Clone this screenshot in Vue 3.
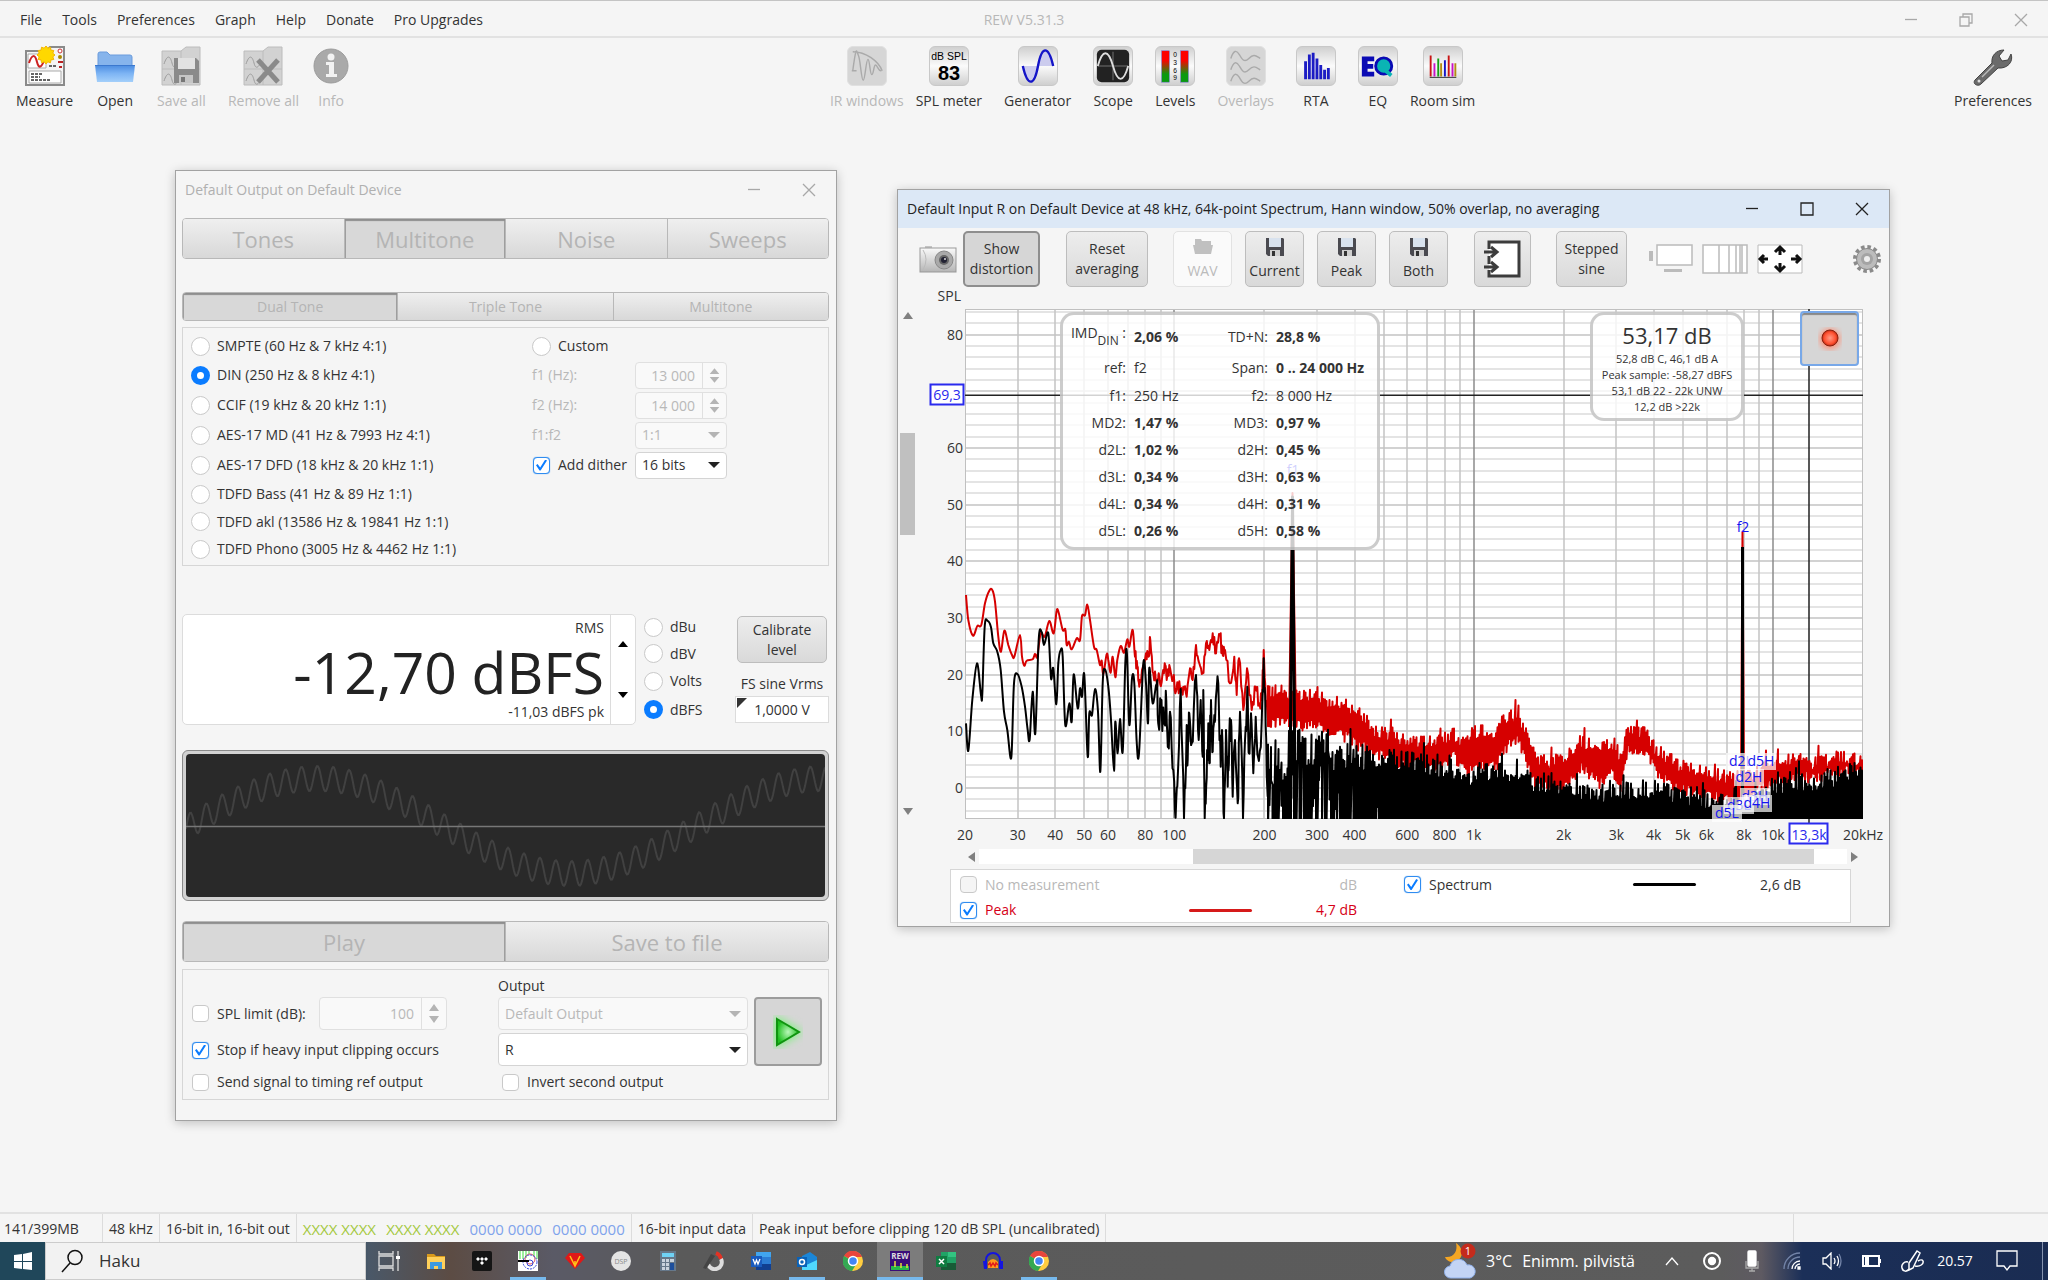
<template>
  <div class="app">
    <!-- menu bar -->
    <header class="menubar">
      <nav class="menu">
        <a v-for="item in menuItems" :key="item" href="#">{{ item }}</a>
      </nav>
      <span class="app-title">REW V5.31.3</span>
      <div class="win-controls muted">
        <button aria-label="Minimize"><svg width="14" height="14"><path d="M1 6.5h12" /></svg></button>
        <button aria-label="Restore"><svg width="14" height="14"><path d="M1 4h9v9H1zM4 4V1h9v9h-3" /></svg></button>
        <button aria-label="Close"><svg width="14" height="14"><path d="M1 1l12 12M13 1L1 13" /></svg></button>
      </div>
    </header>

    <!-- main toolbar -->
    <div class="toolbar">
      <div class="tool-group">
        <button class="tool">
          <svg width="40" height="40" viewBox="0 0 40 40">
            <path d="M1 5h20l4-4h14v38H1z" fill="#f4f4f4" stroke="#8a8a8a" stroke-width="2" />
            <path d="M3 8h18v14H3zM4 25h32v12H4z" fill="#fff" stroke="#aaa" />
            <path d="M4 17c3-9 6-9 8-1s5 5 8-4" fill="none" stroke="#c22" stroke-width="2" />
            <path d="M24 20h7M6 28h12M6 31h9M6 34h20" stroke="#333" stroke-width="1.5" stroke-dasharray="3 1" />
            <circle cx="35" cy="5" r="2" fill="#fff" stroke="#c33" />
            <circle cx="35" cy="11" r="2" fill="#a80" />
            <path d="M33 16h5M34 21h3" stroke="#b22" stroke-width="2" />
            <path :d="starPath" fill="#ffd800" stroke="#f3b600" />
          </svg>
          <span>Measure</span>
        </button>
        <button class="tool">
          <svg width="40" height="40" viewBox="0 0 40 40">
            <defs>
              <linearGradient id="folder" x1="0" y1="0" x2="0" y2="1">
                <stop offset="0" stop-color="#4a8be0" /><stop offset="0.5" stop-color="#7db4f4" /><stop offset="1" stop-color="#a3cffa" />
              </linearGradient>
            </defs>
            <path d="M3 8q0-2 2-2h7l3 3h20q2 0 2 2v9H3z" fill="#86b4ec" stroke="#6a9bdc" />
            <path d="M0 19h40l-2 17H2z" fill="url(#folder)" />
            <path d="M0 19.500h40" stroke="#3b78cf" />
          </svg>
          <span>Open</span>
        </button>
        <button class="tool" disabled>
          <svg width="40" height="40" viewBox="0 0 40 40">
            <path d="M1 5h19l5-4h14v38H1z" fill="#d2d2d2" stroke="#bcbcbc" />
            <path d="M1 23h38M20 5v34" stroke="#bcbcbc" />
            <path d="M3 18c3-9 6-9 8-1s5 3 8-2M3 35c3-9 6-9 8-1s5 3 8-2" fill="none" stroke="#9d9d9d" />
            <path d="M13 12h22l3 3v22H13z" fill="#8a8a8a" />
            <path d="M17 12h17v11H17z" fill="#e2e2e2" />
            <path d="M18 29h14v8H18z" fill="#c6c6c6" />
            <path d="M20 31h4v5h-4z" fill="#777" />
          </svg>
          <span>Save all</span>
        </button>
        <div class="tool-pair">
          <button class="tool" disabled>
            <svg width="40" height="40" viewBox="0 0 40 40">
              <path d="M1 5h19l5-4h14v38H1z" fill="#d2d2d2" stroke="#bcbcbc" />
              <path d="M1 23h38M20 5v34" stroke="#bcbcbc" />
              <path d="M3 18c3-9 6-9 8-1s5 3 8-2M3 35c3-9 6-9 8-1s5 3 8-2" fill="none" stroke="#9d9d9d" />
              <path d="M15 14l20 22M35 14L15 36" stroke="#8a8a8a" stroke-width="5" />
            </svg>
            <span>Remove all</span>
          </button>
          <button class="tool" disabled>
            <svg width="40" height="40" viewBox="0 0 40 40">
              <circle cx="20" cy="20" r="17" fill="#a9a9a9" stroke="#9c9c9c" />
              <circle cx="20" cy="11" r="3.500" fill="#f2f2f2" />
              <path d="M15 16h8v12h3v3H15v-3h3v-9h-3z" fill="#f2f2f2" />
            </svg>
            <span>Info</span>
          </button>
        </div>
      </div>

      <div class="tool-group">
        <div class="tool-pair">
          <button class="tool" disabled>
            <svg class="tile off" width="40" height="40" viewBox="0 0 40 40">
              <path d="M5 25c4-30 4-20 6-16s3 26 5 26 3-22 5-22 2 16 4 16 2-10 4-10 3 7 6 6M5 5c14 0 27 10 31 20M4 25h5" />
            </svg>
            <span>IR windows</span>
          </button>
          <button class="tool">
            <svg class="tile" width="40" height="40" viewBox="0 0 40 40">
              <text x="20" y="14" font-size="11" text-anchor="middle" class="arial">dB SPL</text>
              <text x="20" y="35" font-size="21" font-weight="700" text-anchor="middle" class="arial">83</text>
            </svg>
            <span>SPL meter</span>
          </button>
        </div>
        <button class="tool">
          <svg class="tile" width="40" height="40" viewBox="0 0 40 40">
            <path d="M4 20C9 42 16 42 20 20zM20 20C25-2 32-2 36 20z" fill="#ccccee" />
            <path d="M4 20C9 42 16 42 20 20S31-2 36 20" fill="none" stroke="#1414c8" stroke-width="2.500" />
          </svg>
          <span>Generator</span>
        </button>
        <button class="tool">
          <svg class="tile" width="40" height="40" viewBox="0 0 40 40">
            <rect x="3" y="3" width="34" height="34" rx="5" fill="#222" />
            <path d="M20 5v30M4 20h32" stroke="#777" />
            <path d="M4 20C9 2 15 2 20 20s11 18 16 0" fill="none" stroke="#ddd" stroke-width="2" />
          </svg>
          <span>Scope</span>
        </button>
        <button class="tool">
          <svg class="tile" width="40" height="40" viewBox="0 0 40 40">
            <defs>
              <linearGradient id="level" x1="0" y1="0" x2="0" y2="1">
                <stop offset="0.300" stop-color="#f00" /><stop offset="0.750" stop-color="#0a9a10" />
              </linearGradient>
            </defs>
            <rect x="6" y="4" width="8" height="33" fill="url(#level)" stroke="#66c" stroke-width="0.500" />
            <rect x="26" y="4" width="8" height="33" fill="url(#level)" stroke="#66c" stroke-width="0.500" />
            <text v-for="(n, i) in [0, 3, 6, 9]" :key="n" x="20" :y="11 + i * 8" font-size="7" text-anchor="middle" class="arial">{{ n }}</text>
          </svg>
          <span>Levels</span>
        </button>
        <button class="tool" disabled>
          <svg class="tile off" width="40" height="40" viewBox="0 0 40 40">
            <path v-for="y in [0, 12, 24]" :key="y" :d="`M4 ${12 + y}c3-9 6-9 9-4s5 9 10 4 7-3 12 0`" />
          </svg>
          <span>Overlays</span>
        </button>
        <button class="tool">
          <svg class="tile" width="40" height="40" viewBox="0 0 40 40">
            <path d="M9 34V15M13 34V8M17 34V6M21 34V12M25 34V19M29 34V24M33 34V22" stroke="#1c1cc4" stroke-width="3" />
          </svg>
          <span>RTA</span>
        </button>
        <div class="tool-pair">
          <button class="tool">
            <svg class="tile" width="40" height="40" viewBox="0 0 40 40">
              <path d="M3 10h13v5H9v3h6v5H9v3h7v5H3z" fill="#0a0ab4" />
              <circle cx="26" cy="20" r="8.500" fill="#0ab4b4" stroke="#0a0ab4" stroke-width="3" />
              <path d="M28 25l6 5" stroke="#0ab4b4" stroke-width="4" />
            </svg>
            <span>EQ</span>
          </button>
          <button class="tool">
            <svg class="tile" width="40" height="40" viewBox="0 0 40 40">
              <path d="M7 9v22M26 9v22" stroke="#c81414" stroke-width="2" />
              <path d="M11 17v14M30 17v14" stroke="#c814c8" stroke-width="2" />
              <path d="M15 12v19" stroke="#14a014" stroke-width="2" />
              <path d="M18 17v14M33 17v14" stroke="#b48c14" stroke-width="2" />
              <path d="M22 14v17" stroke="#1414c8" stroke-width="2" />
              <path d="M6 32h28" stroke="#333" />
            </svg>
            <span>Room sim</span>
          </button>
        </div>
      </div>

      <button class="tool">
        <svg width="40" height="40" viewBox="0 0 40 40">
          <path d="M2 34L19 17c-1-7 4-13 12-13l-5 6 3 5 6-1 3-6c3 8-4 15-13 14L8 38c-3 3-9 0-6-4z" fill="#6b6b6b" stroke="#444" />
          <circle cx="6" cy="35" r="1.500" fill="#ddd" />
          <path d="M9 31l12-12" stroke="#bbb" stroke-width="1.500" />
        </svg>
        <span>Preferences</span>
      </button>
    </div>

    <main class="desktop">
      <!-- generator window -->
      <section class="window generator">
        <div class="titlebar">
          <span class="title">Default Output on Default Device</span>
          <div class="win-controls muted">
            <button aria-label="Minimize"><svg width="14" height="14"><path d="M1 6.500h12" /></svg></button>
            <button aria-label="Close"><svg width="14" height="14"><path d="M1 1l12 12M13 1L1 13" /></svg></button>
          </div>
        </div>
        <div class="tabs large">
          <button v-for="t in ['Tones', 'Multitone', 'Noise', 'Sweeps']" :key="t" :class="{ active: t === 'Multitone' }">{{ t }}</button>
        </div>
        <div class="tabs sub">
          <button v-for="(t, i) in ['Dual Tone', 'Triple Tone', 'Multitone']" :key="t" :class="{ active: i === 0 }">{{ t }}</button>
        </div>

        <div class="panel tone-panel">
          <div class="tone-list">
            <label v-for="tone in tones" :key="tone" class="choice">
              <input v-model="selectedTone" type="radio" name="tone" :value="tone" />{{ tone }}
            </label>
          </div>
          <div class="custom">
            <label class="choice"><input v-model="selectedTone" type="radio" name="tone" value="Custom" />Custom</label>
            <div class="custom-row">
              <label class="dim" for="f1">f1 (Hz):</label>
              <span class="spinner off"><input id="f1" type="text" value="13 000" disabled /><svg width="24" height="25" viewBox="0 0 24 25"><path d="M7 11l5-6 5 6zM7 14l5 6 5-6z" /></svg></span>
            </div>
            <div class="custom-row">
              <label class="dim" for="f2">f2 (Hz):</label>
              <span class="spinner off"><input id="f2" type="text" value="14 000" disabled /><svg width="24" height="25" viewBox="0 0 24 25"><path d="M7 11l5-6 5 6zM7 14l5 6 5-6z" /></svg></span>
            </div>
            <div class="custom-row">
              <label class="dim" for="ratio">f1:f2</label>
              <span class="select off"><select id="ratio" disabled><option>1:1</option></select><svg width="12" height="8"><path d="M0 1h12l-6 6z" /></svg></span>
            </div>
            <div class="custom-row">
              <label class="choice"><input v-model="addDither" type="checkbox" />Add dither</label>
              <span class="select"><select aria-label="Dither bits"><option>16 bits</option></select><svg width="12" height="8"><path d="M0 1h12l-6 6z" /></svg></span>
            </div>
          </div>
        </div>

        <div class="level-row">
          <div class="level-box">
            <div class="level-text">
              <span>RMS</span>
              <span class="level-value">-12,70 dBFS</span>
              <span>-11,03 dBFS pk</span>
            </div>
            <div class="level-arrows">
              <button aria-label="Up"><svg width="12" height="8"><path d="M1 7h10L6 1z" /></svg></button>
              <button aria-label="Down"><svg width="12" height="8"><path d="M1 1h10L6 7z" /></svg></button>
            </div>
          </div>
          <div class="units">
            <label v-for="u in ['dBu', 'dBV', 'Volts', 'dBFS']" :key="u" class="choice">
              <input v-model="unit" type="radio" name="unit" :value="u" />{{ u }}
            </label>
          </div>
          <div class="calibrate">
            <button class="btn">Calibrate<br />level</button>
            <label for="vrms">FS sine Vrms</label>
            <span class="vrms"><input id="vrms" type="text" value="1,0000 V" /></span>
          </div>
        </div>

        <div class="wave">
          <svg width="100%" height="143" viewBox="0 0 639 143" preserveAspectRatio="none">
            <path :d="wavePath" fill="none" stroke="#414141" stroke-width="2" />
            <path d="M0 72.500h639" stroke="#777" stroke-width="1.500" />
          </svg>
        </div>

        <div class="tabs large">
          <button class="active">Play</button>
          <button>Save to file</button>
        </div>

        <div class="panel output-panel">
          <div class="options">
            <div class="limit">
              <label class="choice"><input type="checkbox" />SPL limit (dB):</label>
              <span class="spinner off tall"><input type="text" value="100" aria-label="SPL limit" disabled /><svg width="24" height="31" viewBox="0 0 24 31"><path d="M7 13l5-7 5 7zM7 18l5 7 5-7z" /></svg></span>
            </div>
            <label class="choice"><input v-model="stopOnClip" type="checkbox" />Stop if heavy input clipping occurs</label>
            <label class="choice"><input type="checkbox" />Send signal to timing ref output</label>
          </div>
          <div class="outputs">
            <label for="device">Output</label>
            <span class="select tall off"><select id="device" disabled><option>Default Output</option></select><svg width="12" height="8"><path d="M0 1h12l-6 6z" /></svg></span>
            <span class="select tall"><select aria-label="Channel"><option>R</option></select><svg width="12" height="8"><path d="M0 1h12l-6 6z" /></svg></span>
            <label class="choice invert"><input type="checkbox" />Invert second output</label>
          </div>
          <button class="play" aria-label="Play">
            <svg width="50" height="60" viewBox="0 0 50 60">
              <defs>
                <radialGradient id="play"><stop offset="0" stop-color="#b8f7b8" /><stop offset="1" stop-color="#1fc01f" /></radialGradient>
                <filter id="glow"><feGaussianBlur stdDeviation="4" /></filter>
              </defs>
              <path d="M13 16l24 14-24 14z" fill="#6fe86f" stroke="#8cf08c" stroke-width="4" filter="url(#glow)" />
              <path d="M14 17l22 13-22 13z" fill="url(#play)" stroke="#109410" stroke-width="2" />
            </svg>
          </button>
        </div>
      </section>

      <!-- RTA window -->
      <section class="window rta">
        <div class="titlebar">
          <span class="title">Default Input R on Default Device at 48 kHz, 64k-point Spectrum, Hann window, 50% overlap, no averaging</span>
          <div class="win-controls">
            <button aria-label="Minimize"><svg width="14" height="14"><path d="M1 6.500h12" /></svg></button>
            <button aria-label="Maximize"><svg width="14" height="14"><path d="M1 1h12v12H1z" /></svg></button>
            <button aria-label="Close"><svg width="14" height="14"><path d="M1 1l12 12M13 1L1 13" /></svg></button>
          </div>
        </div>

        <div class="rta-tools">
          <button class="bare" aria-label="Capture image">
            <svg width="38" height="28" viewBox="0 0 38 28">
              <defs>
                <linearGradient id="cam" x1="0" y1="0" x2="0" y2="1"><stop offset="0" stop-color="#fafafa" /><stop offset="1" stop-color="#b5b5b5" /></linearGradient>
              </defs>
              <path d="M6 1h7v3H6z" fill="#c4c4c4" />
              <rect x="1" y="3" width="36" height="24" fill="url(#cam)" stroke="#999" />
              <path d="M4 5q6 9 0 20" fill="none" stroke="#bbb" />
              <circle cx="25" cy="15" r="9" fill="#a9a9a9" stroke="#888" />
              <circle cx="25" cy="15" r="5" fill="#666" />
              <circle cx="25" cy="15" r="3" fill="#223" />
              <circle cx="26" cy="14" r="1" fill="#ddd" />
            </svg>
          </button>
          <button class="btn pressed distortion-btn">Show<br />distortion</button>
          <button class="btn reset-btn">Reset<br />averaging</button>
          <div class="save-buttons">
            <button class="btn" disabled>
              <svg width="20" height="20" viewBox="0 0 20 20"><path d="M2 2h6l1 2h9v4H2zM0 8h20l-2 9H2z" fill="#c0c0c0" /></svg>WAV
            </button>
            <button v-for="s in ['Current', 'Peak', 'Both']" :key="s" class="btn">
              <svg width="20" height="20" viewBox="0 0 20 20">
                <path d="M1 1h17l1 1v17H3l-2-2z" fill="#4a4a50" />
                <path d="M4 1h12v9H4z" fill="#d8e2ee" />
                <path d="M5 13h10v6H5z" fill="#d0d0d0" />
                <path d="M7 14h3v5H7z" fill="#333" />
              </svg>{{ s }}
            </button>
          </div>
          <button class="btn import-btn" aria-label="Import">
            <svg width="38" height="38" viewBox="0 0 38 38">
              <path d="M5 2h30v34H5z" fill="#fff" />
              <path d="M5 9V2h30v34H5v-6M5 16v8" fill="none" stroke="#3c3c3c" stroke-width="3" />
              <path d="M0 12h12M7 7l6 5-6 5M0 27h12M7 22l6 5-6 5" fill="none" stroke="#3c3c3c" stroke-width="3" />
            </svg>
          </button>
          <button class="btn stepped-btn">Stepped<br />sine</button>
          <div class="view-icons">
            <button class="bare" aria-label="Scrollbars"><svg width="44" height="30" viewBox="0 0 44 30"><path d="M0 7h4v10H0zM15 25h18v3H15z" fill="#bbb" /><path d="M8 1h35v20H8z" fill="#fff" stroke="#bbb" stroke-width="1.500" /></svg></button>
            <button class="bare" aria-label="Frequency axis"><svg width="46" height="30" viewBox="0 0 46 30"><path d="M1 1h44v28H1z" fill="#fff" /><path d="M1 1h44v28H1zM17 1v28M27 1v28M34 1v28M38 1v28M40 1v28" fill="none" stroke="#bbb" stroke-width="1.500" /></svg></button>
            <button class="bare" aria-label="Graph limits"><svg width="46" height="30" viewBox="0 0 46 30"><path d="M1 1h44v28H1z" fill="#fff" stroke="#bbb" /><path d="M11 15H3M7 11l-4 4 4 4M34 15h9M39 11l4 4-4 4M23 11V3M18 8l5-5 5 5M23 19v8M18 22l5 5 5-5" fill="none" stroke="#111" stroke-width="3" /></svg></button>
          </div>
          <button class="bare gear" aria-label="Controls">
            <svg width="30" height="30" viewBox="0 0 30 30">
              <circle cx="15" cy="15" r="12" fill="none" stroke="#8a8a8a" stroke-width="4" stroke-dasharray="3.500 2.783" />
              <circle cx="15" cy="15" r="10.500" fill="#bcbcbc" stroke="#8a8a8a" />
              <circle cx="15" cy="15" r="6" fill="#a4a4a4" />
              <circle cx="15" cy="15" r="3" fill="#eee" />
            </svg>
          </button>
        </div>

        <div class="graph-row">
          <div class="vscroll">
            <svg width="10" height="7"><path d="M0 7h10L5 0z" /></svg>
            <div class="vtrack"><div class="vthumb"></div></div>
            <svg width="10" height="7"><path d="M0 0h10L5 7z" /></svg>
          </div>
          <div class="graph">
            <svg class="plot" width="972" height="561" viewBox="0 0 972 561">
              <defs>
                <clipPath id="plot-area"><rect x="48" y="22" width="898" height="510" /></clipPath>
              </defs>
              <rect x="48" y="22" width="898" height="510" fill="#fff" />
              <path :d="minorLines" stroke="#dcdcdc" stroke-width="1.500" />
              <path :d="majorLines" stroke="#c4c4c4" stroke-width="1.500" />
              <path :d="decadeLines" stroke="#8c8c8c" stroke-width="1.500" />
              <rect x="48.500" y="22.500" width="897" height="509" fill="none" stroke="#c0c0c0" />
              <path :d="cursorLines" stroke="#222" stroke-width="1.500" />
              <g clip-path="url(#plot-area)" fill="none" stroke-linejoin="round">
                <path :d="peakTrace" stroke="#d60000" stroke-width="2" />
                <path :d="peakNoise" stroke="#d60000" stroke-width="2" />
                <path d="M372 440L375.500 206L379 440M824 490L825.500 245L827 490" stroke="#d60000" stroke-width="2" />
                <path :d="spectrumTrace" stroke="#000" stroke-width="2" />
                <path :d="spectrumNoise" stroke="#000" stroke-width="2" />
                <path :d="spectrumFloor" fill="#000" />
                <path d="M373.500 532V440L375.500 210L377.500 440V532M825.500 532V260" stroke="#000" stroke-width="3" />
              </g>
              <g class="marker">
                <template v-for="m in markers" :key="m.text">
                  <rect v-if="m.box" :x="m.x - 15" :y="m.y - 13" width="30" height="17" fill="#fff" fill-opacity="0.700" />
                  <text :x="m.x" :y="m.y">{{ m.text }}</text>
                </template>
              </g>
              <g class="axis" text-anchor="end">
                <text x="44" y="14">SPL</text>
                <text v-for="db in [80, 60, 50, 40, 30, 20, 10, 0]" :key="db" x="46" :y="yOf(db) + 5">{{ db }}</text>
              </g>
              <g class="axis" text-anchor="middle">
                <text v-for="f in freqLabels" :key="f.text" :x="xOf(f.hz)" y="553">{{ f.text }}</text>
              </g>
              <g class="cursor-label">
                <rect x="13.500" y="97.500" width="33" height="20" /><text x="30" y="113">69,3</text>
                <rect x="872.500" y="536.500" width="38" height="20" /><text x="892" y="553">13,3k</text>
              </g>
            </svg>

            <div class="info distortion">
              <template v-for="(row, i) in distortion" :key="i">
                <span class="key" :class="{ imd: i === 0 }">{{ row[0] }}<sub v-if="i === 0">DIN</sub><template v-if="i === 0"> :</template></span>
                <span :class="{ strong: row[4] }">{{ row[1] }}</span>
                <span class="key">{{ row[2] }}</span>
                <span :class="{ strong: row[5] }">{{ row[3] }}</span>
              </template>
            </div>

            <div class="info spl">
              <strong>53,17 dB</strong>
              <span>52,8 dB C, 46,1 dB A</span>
              <span>Peak sample: -58,27 dBFS</span>
              <span>53,1 dB 22 - 22k UNW</span>
              <span>12,2 dB &gt;22k</span>
            </div>

            <button class="record" aria-label="Record">
              <svg width="40" height="40" viewBox="0 0 40 40">
                <defs>
                  <radialGradient id="led"><stop offset="0" stop-color="#ff9a86" /><stop offset="0.700" stop-color="#ff5233" /><stop offset="1" stop-color="#c22c12" /></radialGradient>
                  <filter id="led-glow"><feGaussianBlur stdDeviation="3" /></filter>
                </defs>
                <circle cx="20" cy="20" r="10" fill="#ff8a70" filter="url(#led-glow)" />
                <circle cx="20" cy="19" r="8" fill="url(#led)" stroke="#8a2010" />
              </svg>
            </button>
          </div>
        </div>

        <div class="hscroll">
          <svg width="7" height="10"><path d="M7 0v10L0 5z" /></svg>
          <div class="htrack"><div class="hthumb"></div></div>
          <svg width="7" height="10"><path d="M0 0v10l7-5z" /></svg>
        </div>

        <div class="legend">
          <label class="choice dim"><input type="checkbox" disabled />No measurement</label>
          <span></span>
          <span class="value dim">dB</span>
          <label class="choice"><input v-model="showSpectrum" type="checkbox" />Spectrum</label>
          <i class="line"></i>
          <span class="value">2,6 dB</span>
          <label class="choice red"><input v-model="showPeak" type="checkbox" />Peak</label>
          <i class="line red"></i>
          <span class="value red">4,7 dB</span>
        </div>
      </section>
    </main>

    <!-- status bar -->
    <footer class="status">
      <span class="memory">141/399MB</span>
      <span>48 kHz</span>
      <span>16-bit in, 16-bit out</span>
      <span class="bits"><b>XXXX XXXX</b><b>XXXX XXXX</b><em>0000 0000</em><em>0000 0000</em></span>
      <span>16-bit input data</span>
      <span>Peak input before clipping 120 dB SPL (uncalibrated)</span>
      <span class="fill"></span>
      <span class="last"></span>
    </footer>

    <!-- taskbar -->
    <div class="taskbar">
      <button class="start" aria-label="Start">
        <svg width="18" height="18" viewBox="0 0 18 18"><path d="M0 3l8-1v7H0zM9 2l9-2v9H9zM0 10h8v7l-8-1zM9 10h9v8l-9-1z" fill="#fff" /></svg>
      </button>
      <label class="search">
        <svg width="24" height="24" viewBox="0 0 24 24"><circle cx="15" cy="8.500" r="7" fill="none" stroke="#111" stroke-width="1.500" /><path d="M10 14l-8 9" stroke="#111" stroke-width="1.500" /></svg>
        <input type="text" placeholder="Haku" />
      </label>
      <div class="apps">
        <button aria-label="Task view"><svg width="22" height="22" viewBox="0 0 22 22"><path d="M1 1v3h14V1M1 21v-3h14v3M1 6h14v10H1zM20 1v20" fill="none" stroke="#ddd" stroke-width="1.300" /><path d="M18 6h4v3h-4z" fill="#fff" /></svg></button>
        <button aria-label="Files"><svg width="20" height="20" viewBox="0 0 20 20"><path d="M1 3h7l2 2h9v12H1z" fill="#d99a1c" /><path d="M1 6h18v12H1z" fill="#ffd05a" /><path d="M4 18v-7h12v7h-4v-3H8v3z" fill="#3f9ade" /></svg></button>
        <button aria-label="Tidal"><svg width="20" height="20" viewBox="0 0 20 20"><rect width="20" height="20" rx="2" fill="#151515" /><path d="M4 8l2-2 2 2-2 2zM8 8l2-2 2 2-2 2zM12 8l2-2 2 2-2 2zM8 12l2-2 2 2-2 2z" fill="#fff" /></svg></button>
        <button class="open" aria-label="Signal viewer">
          <svg width="20" height="20" viewBox="0 0 20 20"><rect width="20" height="20" fill="#fff" /><path d="M2 0v8M5 0v8M8 0v7M11 0v3M16 0v5M19 0v8" stroke="#3ddc3d" /><circle cx="12" cy="8" r="5" fill="none" stroke="#e05060" /><circle cx="12" cy="11" r="7" fill="none" stroke="#3346d8" stroke-dasharray="2 1" /><circle cx="12" cy="12" r="3" fill="none" stroke="#3346d8" /><path d="M0 10h11" stroke="#000" stroke-width="2" /></svg>
        </button>
        <button aria-label="Voice"><svg width="20" height="18" viewBox="0 0 20 18"><path d="M4 1h12l4 5-10 11L0 6z" fill="#e01818" /><path d="M5 4l5 10 5-10M10 9v5" fill="none" stroke="#ffc21a" stroke-width="1.500" /></svg></button>
        <button aria-label="DSP"><svg width="20" height="20" viewBox="0 0 20 20"><circle cx="10" cy="10" r="10" fill="#e4e4e4" /><text x="10" y="13" font-size="7" text-anchor="middle" fill="#8a8a8a">DSP</text></svg></button>
        <button aria-label="Calculator"><svg width="18" height="20" viewBox="0 0 18 20"><rect x="1" width="16" height="20" fill="#66788a" /><path d="M3 2h12v4H3z" fill="#6fd2f5" /><path d="M3 8h3v3H3zM7 8h3v3H7zM11 8h4v3h-4zM3 12h3v3H3zM7 12h3v3H7zM3 16h3v3H3zM7 16h3v3H7z" fill="#c8d2dc" /><path d="M11 12h4v7h-4z" fill="#1e4f9c" /></svg></button>
        <button aria-label="Gauge"><svg width="22" height="20" viewBox="0 0 22 20"><path d="M13 2a8 8 0 0 1 5 6" fill="none" stroke="#e33224" stroke-width="4" /><path d="M18 8a7 7 0 1 1-13 5" fill="none" stroke="#ddd" stroke-width="4" /><path d="M8 3l4 2-9 13-3-1z" fill="#444" /></svg></button>
        <button aria-label="Word"><svg width="20" height="18" viewBox="0 0 20 18"><path d="M5 0h15v18H5z" fill="#2b7cd3" /><path d="M5 0h15v5H5z" fill="#41a5ee" /><path d="M5 12h15v6H5z" fill="#103f91" /><path d="M0 4h11v11H0z" fill="#185abd" /><path d="M2 7l2 5 1.500-4L7 12l2-5" fill="none" stroke="#fff" stroke-width="1.300" /></svg></button>
        <button class="open" aria-label="Outlook"><svg width="20" height="18" viewBox="0 0 20 18"><path d="M5 4l8-4 7 5v13H5z" fill="#1a86d8" /><path d="M5 15l15-7v10H5z" fill="#50d9ff" /><path d="M0 5h10v10H0z" fill="#0a62b8" /><circle cx="5" cy="10" r="2.500" fill="none" stroke="#fff" stroke-width="1.500" /></svg></button>
        <button aria-label="Chrome"><svg width="20" height="20" viewBox="0 0 20 20"><circle cx="10" cy="10" r="10" fill="#ffcd40" /><path d="M10 10L1 5a10 10 0 0 1 18 1h-9z" fill="#e8453c" /><path d="M1 5a10 10 0 0 0 8 15l5-8-4-2z" fill="#34a853" /><circle cx="10" cy="10" r="4.500" fill="#4285f4" stroke="#fff" stroke-width="1.500" /></svg></button>
        <button class="open current" aria-label="REW"><svg width="20" height="20" viewBox="0 0 20 20"><rect width="20" height="20" fill="#3a0d78" /><text x="10" y="8" font-size="8" font-weight="700" text-anchor="middle" fill="#ddd">REW</text><path d="M1 17h18" stroke="#27b84a" stroke-width="4" /><path d="M5 10v6M11 12v5M17 13v4" stroke="#e8dc3a" stroke-width="1.500" /></svg></button>
        <button aria-label="Excel"><svg width="20" height="18" viewBox="0 0 20 18"><path d="M5 0h15v18H5z" fill="#21a366" /><path d="M12 0h8v5h-8z" fill="#33c481" /><path d="M5 11h15v7H5z" fill="#185c37" /><path d="M0 4h11v11H0z" fill="#107c41" /><path d="M3 7l5 5M8 7l-5 5" stroke="#fff" stroke-width="1.500" /></svg></button>
        <button aria-label="Audacity"><svg width="20" height="18" viewBox="0 0 20 18"><path d="M5 10q5-6 10 0v6H5z" fill="#ff9a1c" /><path d="M3 10V8a7 7 0 0 1 14 0v2" fill="none" stroke="#1414e0" stroke-width="2" /><path d="M0 9h4v8H1zM16 9h4v8h-4z" fill="#1414e0" /><path d="M5 13l2-2 1 3 2-3 2 3 1-3 2 2" fill="none" stroke="#e01c1c" stroke-width="1.500" /></svg></button>
        <button class="open" aria-label="Chrome 2"><svg width="20" height="20" viewBox="0 0 20 20"><circle cx="10" cy="10" r="10" fill="#ffcd40" /><path d="M10 10L1 5a10 10 0 0 1 18 1h-9z" fill="#e8453c" /><path d="M1 5a10 10 0 0 0 8 15l5-8-4-2z" fill="#34a853" /><circle cx="10" cy="10" r="4.500" fill="#4285f4" stroke="#fff" stroke-width="1.500" /></svg></button>
      </div>
      <button class="weather">
        <svg width="32" height="36" viewBox="0 0 32 36">
          <path d="M12 0c8 5 8 16-1 19-5 1-9-2-10-5 9 1 13-6 11-14z" fill="#f5a623" />
          <path d="M7 35a6 6 0 0 1-1-12 9 9 0 0 1 17-1 6 6 0 0 1 3 13z" fill="#c3d4f5" stroke="#8fb0ea" />
          <circle cx="24" cy="8" r="7.500" fill="#c42b1c" />
          <text x="24" y="12" font-size="11" text-anchor="middle" fill="#fff">1</text>
        </svg>
        <span>3°C</span><span>Enimm. pilvistä</span>
      </button>
      <div class="tray">
        <button aria-label="Show hidden icons"><svg width="14" height="9"><path d="M1 8l6-7 6 7" /></svg></button>
        <button aria-label="Location"><svg width="20" height="20"><circle cx="10" cy="10" r="8" stroke-width="2" /><circle cx="10" cy="10" r="3.500" fill="#fff" /></svg></button>
        <button aria-label="Microphone"><svg width="14" height="22"><rect x="3" y="1" width="8" height="15" rx="1" fill="#fff" /><path d="M1 11v7h12v-7M7 18v3M4 21h6" stroke="#aaa" /></svg></button>
        <button aria-label="Network"><svg width="18" height="18"><path d="M1 17A16 16 0 0 1 17 1M5 17A12 12 0 0 1 17 5" stroke="#7384a8" /><path d="M9 17a8 8 0 0 1 8-8M12 17a5 5 0 0 1 5-5" /><path d="M15 15h2v2h-2z" fill="#fff" /></svg></button>
        <button aria-label="Volume"><svg width="20" height="18"><path d="M1 6h3l5-5v16l-5-5H1zM12 6q2 3 0 6M15 4q3 5 0 10" /><path d="M17 2q4 7 0 14" stroke="#7384a8" /></svg></button>
        <button aria-label="Battery"><svg width="20" height="14"><path d="M1 2h16v10H1zM18 5v4" stroke-width="2" /><path d="M3 3h4v8H3z" fill="#fff" stroke="none" /></svg></button>
        <button aria-label="Pen"><svg width="24" height="24"><path d="M9 14L17 2l3 2-7 15-4 2zM8 13c-4-1-7 3-6 6 1 4 5 4 7 1M15 17c5 1 9-2 8-5-1-2-3-1-5 0" stroke-width="1.500" /></svg></button>
        <span class="clock">20.57</span>
        <button aria-label="Notifications"><svg width="22" height="22"><path d="M1 1h20v15h-7l-3 4-3-4H1z" /></svg></button>
      </div>
    </div>
  </div>
</template>

<script setup>
import { ref } from 'vue'

const menuItems = ['File', 'Tools', 'Preferences', 'Graph', 'Help', 'Donate', 'Pro Upgrades']

const tones = [
  'SMPTE (60 Hz & 7 kHz 4:1)',
  'DIN (250 Hz & 8 kHz 4:1)',
  'CCIF (19 kHz & 20 kHz 1:1)',
  'AES-17 MD (41 Hz & 7993 Hz 4:1)',
  'AES-17 DFD (18 kHz & 20 kHz 1:1)',
  'TDFD Bass (41 Hz & 89 Hz 1:1)',
  'TDFD akl (13586 Hz & 19841 Hz 1:1)',
  'TDFD Phono (3005 Hz & 4462 Hz 1:1)'
]
const selectedTone = ref(tones[1])
const addDither = ref(true)
const unit = ref('dBFS')
const stopOnClip = ref(true)
const showSpectrum = ref(true)
const showPeak = ref(true)

// label, value, label, value, first bold, second bold
const distortion = [
  ['IMD', '2,06 %', 'TD+N:', '28,8 %', true, true],
  ['ref:', 'f2', 'Span:', '0 .. 24 000 Hz', false, true],
  ['f1:', '250 Hz', 'f2:', '8 000 Hz', false, false],
  ['MD2:', '1,47 %', 'MD3:', '0,97 %', true, true],
  ['d2L:', '1,02 %', 'd2H:', '0,45 %', true, true],
  ['d3L:', '0,34 %', 'd3H:', '0,63 %', true, true],
  ['d4L:', '0,34 %', 'd4H:', '0,31 %', true, true],
  ['d5L:', '0,26 %', 'd5H:', '0,58 %', true, true]
]

const freqLabels = [
  [20, '20'], [30, '30'], [40, '40'], [50, '50'], [60, '60'], [80, '80'], [100, '100'],
  [200, '200'], [300, '300'], [400, '400'], [600, '600'], [800, '800'], [1000, '1k'],
  [2000, '2k'], [3000, '3k'], [4000, '4k'], [5000, '5k'], [6000, '6k'], [8000, '8k'],
  [10000, '10k'], [20000, '20kHz']
].map(([hz, text]) => ({ hz, text }))

const markers = [
  { text: 'f1', x: 376, y: 188, box: false },
  { text: 'f2', x: 826, y: 245, box: false },
  { text: 'd2L', x: 824, y: 479, box: true },
  { text: 'd5H', x: 844, y: 479, box: true },
  { text: 'd2H', x: 832, y: 495, box: true },
  { text: 'd3H', x: 838, y: 514, box: true },
  { text: 'd3L', x: 822, y: 523, box: true },
  { text: 'd4H', x: 840, y: 521, box: true },
  { text: 'd5L', x: 810, y: 531, box: true }
]

// 座標：頻率為對數、SPL 為線性
function xOf(hz) {
  return Math.round((257.3 + 299.3 * (Math.log10(hz) - 2)) * 10) / 10
}
function yOf(db) {
  return Math.round((501 - 5.667 * db) * 10) / 10
}

let minorLines = ''
let majorLines = ''
let decadeLines = ''
for (let db = -6; db <= 84; db += 2) {
  const y = Math.round(yOf(db))
  if (y > 531) continue
  if (db % 10 === 0) majorLines += `M48 ${y}H946`
  else minorLines += `M48 ${y}H946`
}
for (const base of [10, 100, 1000, 10000]) {
  for (let n = 1; n < 10; n++) {
    const hz = base * n
    if (hz <= 20 || hz >= 20000) continue
    const line = `M${Math.round(xOf(hz))} 22V532`
    if (n === 1) decadeLines += line
    else majorLines += line
  }
}
const cursorLines = `M48 ${yOf(69.3)}H946M892 22V536`

// 低頻部分的取樣點，每像素 3 單位
const peakPoints = [
  228, 165, 235, 240, 249, 287, 262, 258, 274, 255, 285, 190, 298, 152, 307, 150, 315, 185, 325, 290, 333, 335,
  343, 272, 355, 315, 366, 345, 373, 350, 390, 285, 396, 350, 403, 377, 410, 362, 428, 358, 435, 342, 442, 350,
  452, 280, 464, 290, 478, 243, 491, 280, 500, 212, 506, 218, 518, 270, 526, 268, 530, 315, 537, 305, 545, 328,
  560, 295, 570, 300, 576, 228, 585, 226, 592, 194, 600, 240, 612, 320, 620, 330, 630, 375, 635, 362, 640, 402,
  650, 342, 655, 360, 662, 398, 668, 350, 676, 412, 682, 360, 692, 318, 702, 338, 712, 298, 718, 320, 728, 270,
  735, 350, 742, 380, 748, 440, 756, 390, 768, 340, 776, 350, 781, 300, 790, 400, 800, 425, 806, 400, 815, 425,
  824, 370, 830, 420, 838, 375, 850, 415, 856, 460, 864, 435, 872, 455, 880, 440, 890, 470, 900, 385, 908, 420,
  918, 315, 928, 370, 938, 400, 948, 310, 958, 330, 968, 280, 978, 340, 990, 285, 998, 345, 1005, 330, 1020, 430,
  1033, 350, 1040, 465, 1047, 355, 1060, 510, 1071, 385, 1085, 510, 1097, 440, 1107, 490, 1115, 480, 1121, 330,
  1127, 480, 1135, 545
]
const spectrumPoints = [
  228, 550, 235, 632, 247, 480, 261, 370, 273, 465, 277, 462, 284, 260, 293, 243, 303, 262, 310, 310, 322, 335,
  332, 390, 342, 515, 352, 570, 364, 652, 372, 430, 383, 403, 395, 440, 405, 500, 413, 570, 419, 598, 428, 455,
  436, 580, 446, 300, 455, 276, 462, 315, 475, 280, 483, 415, 490, 385, 499, 493, 505, 370, 512, 330, 518, 350,
  526, 555, 538, 490, 545, 545, 551, 403, 563, 505, 570, 445, 576, 470, 583, 405, 593, 650, 598, 520, 606, 525,
  615, 447, 624, 515, 631, 695, 638, 430, 645, 388, 655, 440, 663, 540, 672, 692, 676, 545, 683, 640, 690, 537,
  698, 635, 706, 370, 711, 345, 718, 555, 726, 415, 733, 430, 740, 605, 747, 640, 760, 370, 768, 430, 774, 550,
  778, 383, 788, 490, 800, 435, 806, 560, 812, 510, 822, 550, 829, 483, 835, 600, 840, 515, 850, 690, 855, 812,
  862, 740, 872, 447, 882, 835, 890, 555, 893, 660, 898, 520, 905, 610, 918, 405, 926, 600, 932, 480, 938, 650,
  940, 450, 944, 835, 950, 715, 955, 550, 958, 670, 963, 480, 968, 635, 975, 545, 985, 430, 992, 680, 996, 570,
  1002, 835, 1008, 570, 1013, 740, 1018, 580, 1023, 540, 1028, 770, 1035, 600, 1043, 790, 1050, 515, 1059, 835,
  1067, 560, 1072, 440, 1077, 640, 1083, 520, 1090, 700, 1097, 530, 1104, 650, 1115, 545, 1121, 355, 1127, 560,
  1133, 770
]

// 固定種子，每次重繪都得到同樣的雜訊
let seed = 7
function rand() {
  seed = (seed * 16807) % 2147483647
  return seed / 2147483647
}

function tracePath(points, jitterFrom, jitter) {
  const pts = []
  for (let i = 0; i < points.length; i += 2) {
    pts.push([points[i] / 3 - 27, points[i + 1] / 3 + 253])
  }
  let d = `M${pts[0][0].toFixed(1)} ${pts[0][1].toFixed(1)}`
  for (let i = 1; i < pts.length; i++) {
    const a = pts[i - 1]
    const b = pts[i]
    if (points[i * 2] > jitterFrom) {
      for (let s = 1; s < 4; s++) {
        const jx = a[0] + ((b[0] - a[0]) * s) / 4
        const jy = a[1] + ((b[1] - a[1]) * s) / 4 + (rand() - 0.5) * jitter
        d += `L${jx.toFixed(1)} ${jy.toFixed(1)}`
      }
      d += `L${b[0].toFixed(1)} ${b[1].toFixed(1)}`
    } else {
      // 平滑曲線
      const p = pts[i - 2] || a
      const n = pts[i + 1] || b
      const c = [
        a[0] + (b[0] - p[0]) / 6, a[1] + (b[1] - p[1]) / 6,
        b[0] - (n[0] - a[0]) / 6, b[1] - (n[1] - a[1]) / 6, b[0], b[1]
      ]
      d += `C${c.map(v => v.toFixed(1)).join(' ')}`
    }
  }
  return d
}
const peakTrace = tracePath(peakPoints, 740, 16)
const spectrumTrace = tracePath(spectrumPoints, 800, 34)

// x, 峰值上緣, 峰值下緣, 頻譜上緣
const envelope = [
  [350, 398, 436, 446], [367, 398, 434, 444], [383, 402, 438, 442], [396, 400, 436, 440], [415, 410, 444, 446],
  [430, 412, 450, 454], [441, 418, 458, 456], [456, 436, 464, 462], [480, 444, 476, 466], [503, 448, 478, 468],
  [523, 448, 480, 472], [536, 440, 468, 474], [550, 450, 484, 480], [558, 438, 476, 478], [580, 438, 478, 476],
  [584, 430, 468, 474], [593, 422, 456, 484], [600, 423, 452, 484], [608, 438, 470, 486], [613, 452, 484, 486],
  [620, 466, 500, 488], [633, 468, 498, 488], [650, 463, 498, 488], [656, 456, 490, 490], [663, 448, 480, 496],
  [683, 452, 496, 498], [696, 452, 484, 494], [704, 462, 502, 494], [711, 434, 464, 494], [730, 439, 464, 494],
  [738, 456, 484, 494], [760, 470, 502, 498], [783, 478, 506, 502], [803, 482, 510, 506], [823, 484, 512, 506],
  [843, 478, 502, 498], [856, 468, 496, 492], [883, 466, 490, 488], [896, 470, 490, 486], [926, 462, 484, 480],
  [947, 468, 484, 476]
]
function envAt(x) {
  let i = 0
  while (i < envelope.length - 2 && envelope[i + 1][0] < x) i++
  const a = envelope[i]
  const b = envelope[i + 1]
  const t = (x - a[0]) / (b[0] - a[0])
  return [1, 2, 3].map(k => a[k] + (b[k] - a[k]) * t)
}

let peakNoise = ''
let spectrumNoise = ''
let spectrumFloor = 'M470 540'
for (let x = 351; x <= 946; x += 1.5) {
  const [top, bottom, specTop] = envAt(x)
  const y1 = top + rand() * 14 - (rand() > 0.93 ? 10 : 0)
  const y2 = bottom - 6 + rand() * 12
  peakNoise += `${peakNoise ? 'L' : 'M'}${x} ${y1.toFixed(1)}V${y2.toFixed(1)}`

  // 高頻越來越密，最後填滿到底部
  const gap = Math.max(0, (470 - x) / 120)
  const s1 = specTop + rand() * (22 + gap * 40) - (rand() > 0.9 ? 14 : 2)
  const s2 = rand() < gap * 0.7 ? s1 + 16 + rand() * 44 : 540
  spectrumNoise += `${spectrumNoise ? 'L' : 'M'}${x} ${s1.toFixed(1)}V${s2.toFixed(1)}`
  if (x > 470) spectrumFloor += `L${x} ${(specTop + 14 + rand() * 6).toFixed(1)}`
}
spectrumFloor += 'V540Z'

// 250 Hz 與 8 kHz 疊加的波形
let wavePath = ''
for (let x = 0; x <= 639; x++) {
  const slow = 47.5 * Math.sin(((x - 3) / 508) * 2 * Math.PI)
  const fast = 12.5 * Math.cos(((x - 131.4) / 15.9) * 2 * Math.PI)
  wavePath += `${x ? 'L' : 'M'}${x} ${(72 - slow - fast).toFixed(1)}`
}

let starPath = ''
for (let i = 0; i < 24; i++) {
  const r = i % 2 ? 7 : 9
  const a = (i * Math.PI) / 12
  starPath += `${i ? 'L' : 'M'}${(21 + r * Math.cos(a)).toFixed(1)} ${(9 + r * Math.sin(a)).toFixed(1)}`
}
starPath += 'Z'
</script>

<style>
body {
  background: #f5f5f5;
}
</style>

<style scoped>
* {
  box-sizing: border-box;
}

.app {
  height: 100vh;
  display: flex;
  flex-direction: column;
  background: #f5f5f5;
  color: #333;
  font-family: 'Open Sans', 'Noto Sans', sans-serif;
  font-size: 14px;
  line-height: 20px;
  overflow: hidden;
}

button,
input,
select {
  font: inherit;
  color: inherit;
  margin: 0;
  padding: 0;
}

button {
  border: none;
  background: none;
}

/* ---------- menu bar ---------- */
.menubar {
  height: 38px;
  flex: none;
  display: grid;
  grid-template-columns: 1fr auto 1fr;
  align-items: center;
  padding-top: 2px;
  border-top: 1px solid #c4c4c4;
  border-bottom: 2px solid #e2e2e2;
}

.menu {
  display: flex;
  gap: 20px;
  padding-left: 20px;
}

.menu a {
  color: inherit;
  text-decoration: none;
}

.app-title {
  color: #b8b8b8;
}

.win-controls {
  display: flex;
  justify-content: flex-end;
  stroke: #222;
}

.win-controls.muted {
  stroke: #a8a8a8;
}

.win-controls button {
  width: 55px;
  height: 28px;
  display: flex;
  align-items: center;
  justify-content: center;
}

.win-controls svg {
  fill: none;
  stroke-width: 1.3;
}

/* ---------- toolbar ---------- */
.toolbar {
  height: 74px;
  flex: none;
  display: flex;
  justify-content: space-between;
  padding: 8px 16px 0;
}

.tool-group {
  display: flex;
  gap: 22px;
}

.tool-pair {
  display: flex;
  gap: 12px;
}

.tool {
  display: flex;
  flex-direction: column;
  align-items: center;
  gap: 5px;
  min-width: 40px;
  height: 66px;
}

.tool:disabled {
  color: #b8b8b8;
}

.tile {
  border: 1px solid #c8c8c8;
  border-radius: 6px;
  background: linear-gradient(#d0d0d0, #fbfbfb 50%, #cfcfcf);
}

.tile.off {
  background: #d6d6d6;
  fill: none;
  stroke: #aaa;
  stroke-width: 1.5;
}

.arial {
  font-family: 'Liberation Sans', sans-serif;
}

/* ---------- windows ---------- */
.desktop {
  flex: 1;
  position: relative;
  min-height: 0;
}

.window {
  position: absolute;
  background: #f5f5f5;
  border: 1px solid #a2a2a2;
  box-shadow: 0 2px 10px rgba(0, 0, 0, 0.22);
}

.titlebar {
  display: flex;
  align-items: center;
  justify-content: space-between;
}

.generator {
  left: 175px;
  top: 58px;
  width: 662px;
  padding: 0 7px 20px 6px;
}

.generator .titlebar {
  height: 47px;
  padding: 0 0 10px 3px;
  margin-right: -7px;
  color: #b0b0b0;
}

.tabs {
  display: flex;
  height: 29px;
  border: 1px solid #b8b8b8;
  border-radius: 4px;
  overflow: hidden;
  color: #b4b4b4;
}

.tabs.large {
  height: 41px;
  font-size: 22px;
}

.tabs.sub {
  margin-top: 33px;
}

.tabs button {
  flex: 1;
  background: linear-gradient(#efefef, #d8d8d8);
  border-right: 1px solid #b8b8b8;
}

.tabs button:last-child {
  border-right: none;
}

.tabs button.active {
  background: #d8d8d8;
  box-shadow: inset 0 2px 1px #8e8e8e, inset 1px 0 0 #a0a0a0, inset -1px 0 0 #a0a0a0;
}

.panel {
  border: 1px solid #d6d6d6;
}

/* ---------- choices ---------- */
.choice {
  display: flex;
  align-items: center;
  gap: 7px;
  white-space: nowrap;
}

.choice input {
  appearance: none;
  flex: none;
  width: 19px;
  height: 19px;
  background: #fff;
  border: 1px solid #c9c9c9;
  position: relative;
}

.choice input[type='radio'] {
  border-radius: 50%;
}

.choice input[type='radio']:checked {
  border: 6px solid #0a7cff;
}

.choice input[type='checkbox'] {
  width: 17px;
  height: 17px;
  border-radius: 4px;
  margin: 0 1px;
}

.choice input[type='checkbox']:checked {
  border: 1px solid #2f8cf0;
  box-shadow: 0 0 1px #2f8cf0;
}

.choice input[type='checkbox']:checked::after {
  content: '';
  position: absolute;
  inset: 2px;
  background: #0a7cff;
  clip-path: polygon(0 52%, 14% 42%, 38% 72%, 84% 0, 100% 8%, 42% 100%, 32% 100%);
}

.choice input:disabled {
  background: #f5f5f5;
}

.dim {
  color: #b8b8b8;
}

.red {
  color: #d60018;
}

.tone-panel {
  margin-top: 6px;
  height: 239px;
  padding: 4px 8px;
  display: flex;
}

.tone-list {
  width: 341px;
  display: grid;
  grid-template-rows: 28px repeat(4, 30px) 28px 27px 28px;
}

.custom {
  display: grid;
  grid-template-rows: 28px repeat(4, 30px);
}

.custom-row {
  display: flex;
  align-items: center;
  justify-content: space-between;
  width: 195px;
}

/* ---------- fields ---------- */
.spinner,
.select {
  display: flex;
  align-items: center;
  position: relative;
  width: 92px;
  height: 27px;
  border: 1px solid #d4d4d4;
  border-radius: 4px;
  background: #fff;
}

.spinner.tall,
.select.tall {
  width: auto;
  height: 33px;
}

.off {
  background: #f9f9f9;
  color: #b8b8b8;
  border-color: #e0e0e0;
}

.spinner input {
  width: 67px;
  height: 100%;
  border: none;
  border-right: 1px solid #e0e0e0;
  background: none;
  text-align: right;
  padding-right: 7px;
}

.spinner.tall input {
  width: 102px;
}

.spinner svg {
  fill: #b4b4b4;
}

.select select {
  appearance: none;
  width: 100%;
  height: 100%;
  border: none;
  background: none;
  padding-left: 6px;
  opacity: 1;
}

.select svg {
  position: absolute;
  right: 6px;
  fill: #222;
  pointer-events: none;
}

.select.off svg {
  fill: #b4b4b4;
}

.btn {
  display: flex;
  flex-direction: column;
  align-items: center;
  justify-content: center;
  border: 1px solid #bdbdbd;
  border-radius: 5px;
  background: linear-gradient(#ededed, #d9d9d9);
}

.btn.pressed {
  background: #d6d6d6;
  border: 2px solid #8e8e8e;
}

.btn:disabled {
  background: #fafafa;
  border-color: #e2e2e2;
  color: #bbb;
}

/* ---------- level ---------- */
.level-row {
  margin-top: 48px;
  height: 111px;
  display: flex;
}

.level-box {
  width: 454px;
  display: flex;
  border: 1px solid #dcdcdc;
  border-radius: 5px;
  background: #fff;
}

.level-text {
  flex: 1;
  display: flex;
  flex-direction: column;
  justify-content: space-between;
  align-items: flex-end;
  padding: 3px 6px 2px 0;
}

.level-value {
  padding-top: 4px;
  font-size: 57px;
  line-height: 60px;
  color: #222;
}

.level-arrows {
  width: 25px;
  border-left: 1px solid #dcdcdc;
  display: flex;
  flex-direction: column;
  align-items: center;
  justify-content: center;
  gap: 35px;
}

.level-arrows button {
  height: 16px;
  display: flex;
  align-items: center;
}

.units {
  display: grid;
  grid-template-rows: 26px 27px 28px 29px;
  margin-left: 8px;
}

.calibrate {
  flex: none;
  width: 94px;
  margin-left: auto;
  display: flex;
  flex-direction: column;
  align-items: center;
  padding-top: 2px;
}

.calibrate .btn {
  width: 90px;
  height: 47px;
}

.calibrate label {
  padding: 11px 0 2px;
  white-space: nowrap;
}

.vrms {
  position: relative;
  display: block;
  border: 1px solid #dcdcdc;
  background: #fff;
}

.vrms input {
  display: block;
  width: 92px;
  height: 25px;
  border: none;
  background: none;
  text-align: center;
}

.vrms::before {
  content: '';
  position: absolute;
  left: 1px;
  top: 1px;
  border: 5px solid;
  border-color: #333 transparent transparent #333;
}

.wave {
  margin: 25px 0 20px;
  height: 151px;
  padding: 3px;
  border: 1px solid #8a8a8a;
  border-radius: 6px;
  background: #d2d2d2;
}

.wave svg {
  display: block;
  border-radius: 4px;
  background: #292929;
}

/* ---------- output ---------- */
.output-panel {
  margin-top: 7px;
  height: 131px;
  display: flex;
  padding: 6px 6px 0 8px;
}

.options {
  width: 256px;
  padding-top: 21px;
  display: flex;
  flex-direction: column;
}

.options > .choice {
  height: 32px;
}

.limit {
  display: flex;
  justify-content: space-between;
  height: 33px;
  margin-bottom: 4px;
}

.outputs {
  width: 250px;
  margin-left: 51px;
  display: flex;
  flex-direction: column;
}

.outputs > label:first-child {
  margin-bottom: 1px;
}

.outputs .select {
  margin-bottom: 3px;
}

.outputs .invert {
  height: 26px;
  padding-left: 3px;
}

.play {
  width: 68px;
  height: 69px;
  margin: 21px 0 0 6px;
  display: flex;
  align-items: center;
  justify-content: center;
  border: 2px solid #9c9c9c;
  border-radius: 4px;
  background: #d6d6d6;
}

/* ---------- RTA window ---------- */
.rta {
  left: 897px;
  top: 77px;
  width: 993px;
  padding-bottom: 3px;
}

.rta .titlebar {
  height: 38px;
  padding-left: 9px;
  background: #dce8f6;
  color: #222;
}

.rta-tools {
  display: flex;
  align-items: center;
  height: 59px;
  padding: 2px 7px 0 21px;
}

.bare {
  display: flex;
}

.rta-tools .btn {
  height: 56px;
}

.distortion-btn {
  width: 77px;
  margin-left: 6px;
}

.reset-btn {
  width: 82px;
  margin-left: 26px;
}

.save-buttons {
  display: flex;
  gap: 13px;
  margin-left: 25px;
}

.save-buttons .btn {
  width: 59px;
  gap: 4px;
}

.import-btn {
  width: 57px;
  margin-left: 26px;
}

.stepped-btn {
  width: 71px;
  margin-left: 25px;
}

.view-icons {
  display: flex;
  gap: 9px;
  margin-left: 22px;
}

.gear {
  margin-left: auto;
}

.graph-row {
  display: flex;
}

.vscroll {
  width: 19px;
  padding: 25px 0 33px;
  display: flex;
  flex-direction: column;
  align-items: center;
  fill: #808080;
}

.vtrack {
  flex: 1;
  padding-top: 114px;
}

.vthumb {
  width: 15px;
  height: 102px;
  background: #c0c0c0;
}

.graph {
  position: relative;
}

.plot {
  display: block;
}

.axis {
  fill: #333;
}

.marker {
  fill: #1414f0;
  text-anchor: middle;
}

.cursor-label rect {
  fill: #fff;
  stroke: #2a2aee;
  stroke-width: 2;
}

.cursor-label text {
  fill: #2a2aee;
  text-anchor: middle;
}

.info {
  position: absolute;
  border: 3px solid rgba(170, 170, 170, 0.6);
  border-radius: 14px;
  background: rgba(255, 255, 255, 0.8);
}

.distortion {
  left: 143px;
  top: 25px;
  width: 320px;
  height: 238px;
  padding: 5px 0 0 3px;
  display: grid;
  grid-template-columns: 60px 63px 63px auto;
  grid-template-rows: 34px 28px repeat(6, 27px);
  column-gap: 8px;
  align-items: center;
  white-space: nowrap;
}

.distortion .key {
  text-align: right;
}

.distortion .imd {
  padding-bottom: 5px;
}

.distortion sub {
  font-size: 12px;
  line-height: 12px;
  vertical-align: -7px;
}

.strong {
  font-weight: 700;
}

.spl {
  left: 673px;
  top: 25px;
  width: 154px;
  height: 109px;
  padding-top: 4px;
  display: flex;
  flex-direction: column;
  align-items: center;
  font-size: 11px;
  line-height: 16px;
}

.spl strong {
  font-size: 22px;
  line-height: 32px;
  font-weight: 400;
}

.record {
  position: absolute;
  left: 883px;
  top: 24px;
  width: 59px;
  height: 55px;
  display: flex;
  align-items: center;
  justify-content: center;
  border: 2px solid #78a8e8;
  border-radius: 4px;
  background: #d6d6d6;
  box-shadow: inset 0 2px 1px #888;
}

.hscroll {
  display: flex;
  align-items: center;
  gap: 4px;
  padding: 1px 31px 0 70px;
  fill: #808080;
}

.htrack {
  flex: 1;
  height: 15px;
  padding-left: 24%;
  background: #fff;
}

.hthumb {
  width: 95%;
  height: 100%;
  background: #d6d6d6;
}

.legend {
  margin: 5px 38px 0 52px;
  height: 54px;
  padding: 2px 0 0 8px;
  display: grid;
  grid-template-columns: 230px 63px 105px 276px 63px 105px;
  grid-template-rows: 25px 26px;
  align-items: center;
  border: 1px solid #d6d6d6;
  background: #fff;
}

.legend .choice:nth-of-type(2) {
  padding-left: 46px;
}

.legend .line {
  height: 3px;
  border-radius: 2px;
  background: #000;
}

.legend .line.red {
  background: #d61a1a;
}

.value {
  text-align: right;
}

/* ---------- status bar ---------- */
.status {
  height: 30px;
  flex: none;
  display: flex;
  line-height: 30px;
  border-top: 2px solid #e2e2e2;
  white-space: nowrap;
}

.status > span {
  padding: 0 6px;
  border-right: 1px solid #dcdcdc;
}

.status .memory {
  width: 103px;
  padding-left: 4px;
}

.status .bits {
  display: flex;
  justify-content: space-between;
  width: 335px;
  font-size: 15px;
}

.status b {
  font-weight: 400;
  color: #a3c83c;
}

.status em {
  font-style: normal;
  color: #7fa3ec;
}

.status .fill {
  flex: 1;
}

.status .last {
  width: 254px;
  border-right: none;
}

/* ---------- taskbar ---------- */
.taskbar {
  height: 38px;
  flex: none;
  display: flex;
  color: #fff;
  background: linear-gradient(90deg, #20475a 0, #20475a 17%, #4a5868 18%, #5c4c44 22%, #5a5a66 27%, #5a5a5a 33%, #5c5c5c 84%, #5e5a62 86%, #1b2f58 88%, #1a2c52 100%);
}

.start {
  width: 45px;
  display: flex;
  align-items: center;
  justify-content: center;
}

.search {
  width: 321px;
  display: flex;
  align-items: center;
  gap: 15px;
  padding-left: 14px;
  background: #f2f2f2;
  border: 1px solid #ccc;
}

.search input {
  width: 200px;
  border: none;
  background: none;
  font-size: 17px;
}

.search input::placeholder {
  color: #333;
  opacity: 1;
}

.apps {
  width: 34%;
  display: grid;
  grid-template-columns: repeat(15, 1fr);
}

.apps button {
  display: flex;
  align-items: center;
  justify-content: center;
}

.apps .open {
  background: linear-gradient(#76b9ed, #76b9ed) bottom / 36px 3px no-repeat;
}

.apps .current {
  background-color: #7c7c7c;
  background-size: 100% 3px;
}

.weather {
  margin-left: auto;
  display: flex;
  align-items: center;
  gap: 10px;
  font-size: 16px;
}

.tray {
  display: flex;
  align-items: center;
  margin-left: 17px;
  padding-right: 6px;
  fill: none;
  stroke: #fff;
  border-right: 1px solid #8592ad;
  margin-right: 5px;
}

.tray svg {
  stroke-width: 1.3;
}

.tray button {
  width: 40px;
  display: flex;
  justify-content: center;
}

.tray .clock {
  width: 46px;
  text-align: center;
}

.tray .clock + button {
  width: 58px;
}
</style>
